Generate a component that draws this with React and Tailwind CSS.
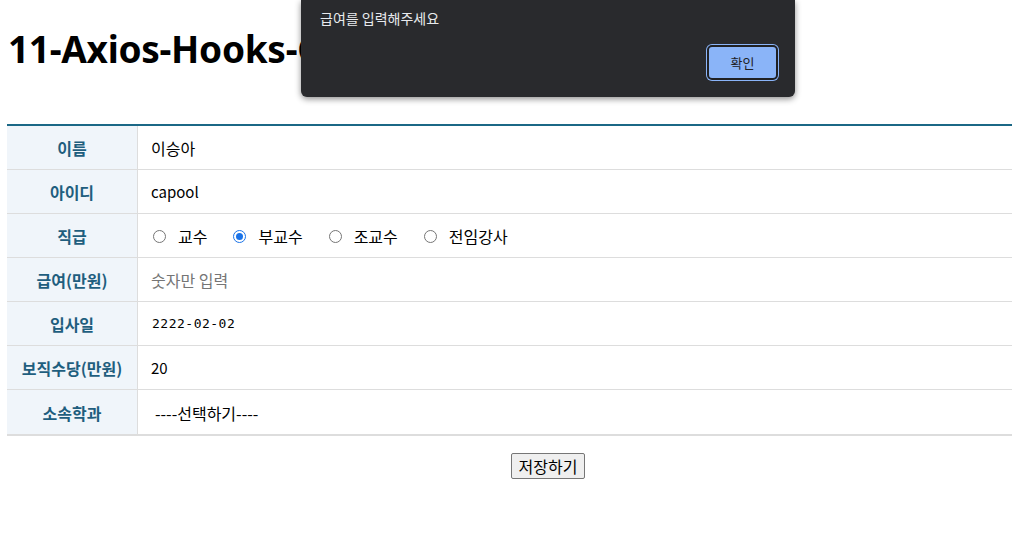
const rows = [
  { label: '이름', value: <span className="text-[16px]">이승아</span> },
  { label: '아이디', value: <span className="text-[15px]">capool</span> },
  {
    label: '직급',
    value: (
      <div className="flex items-center text-[16px]">
        {[
          ['교수', false],
          ['부교수', true],
          ['조교수', false],
          ['전임강사', false],
        ].map(([t, on]) => (
          <label key={t} className="flex items-center mr-[24px]">
            <span
              className={
                'w-[13px] h-[13px] rounded-full border flex items-center justify-center ml-[2px] mr-[12px] ' +
                (on ? 'border-[#1a73e8]' : 'border-[#767676]')
              }
            >
              {on && <span className="w-[7px] h-[7px] rounded-full bg-[#1a73e8]" />}
            </span>
            <span>{t}</span>
          </label>
        ))}
      </div>
    ),
  },
  { label: '급여(만원)', value: <span className="text-[16px] text-[#757575]">숫자만 입력</span> },
  {
    label: '입사일',
    value: <span className="pl-[1px] font-['DejaVu_Sans_Mono',monospace] text-[13px] tracking-[0.5px]">2222-02-02</span>,
  },
  { label: '보직수당(만원)', value: <span className="text-[15px]">20</span> },
  { label: '소속학과', value: <span className="pl-[4px] text-[16px]">----선택하기----</span> },
]

export default function App() {
  return (
    <div className="relative w-[1012px] h-[537px] overflow-hidden bg-white font-['Noto_Sans','Noto_Sans_CJK_KR',sans-serif] text-black">
      <h1 className="pt-[23px] pl-[8px] text-[37px] leading-[52px] font-bold tracking-[-0.3px]">
        11-Axios-Hooks-CRUD
      </h1>

      <div className="pl-[7px] mt-[49px]">
        <div className="border-t-2 border-[#1b6886] border-b-2 border-b-[#dddddd]">
          {rows.map((r, i) => (
            <div
              key={r.label}
              className={'flex h-[44px] ' + (i < rows.length - 1 ? 'border-b border-[#dddddd]' : '')}
            >
              <div className="w-[131px] shrink-0 bg-[#f0f5fa] border-r border-[#dddddd] flex items-center justify-center pt-[1px] text-[16px] font-bold text-[#1f5e7e] font-['Noto_Sans_CJK_KR',sans-serif]">
                {r.label}
              </div>
              <div className="flex items-center pl-[13px] pt-[1px] font-['Noto_Sans_CJK_KR',sans-serif]">
                {r.value}
              </div>
            </div>
          ))}
        </div>
      </div>

      <div className="flex justify-center mt-[17px]">
        <button className="ml-[84px] h-[26px] px-[7px] border border-[#767676] rounded-[2px] bg-[#efefef] text-[16px] leading-none font-['Noto_Sans_CJK_KR',sans-serif]">
          저장하기
        </button>
      </div>

      <div className="absolute left-[301px] top-0 w-[494px] h-[97px] bg-[#292a2d] rounded-b-[6px] shadow-[0_2px_6px_rgba(0,0,0,0.45)] font-['Noto_Sans_CJK_KR',sans-serif]">
        <div className="pl-[19px] pt-[8px] text-[14px] text-[#e8eaed]">급여를 입력해주세요</div>
        <button className="absolute left-[406px] top-[45px] w-[71px] h-[35px] rounded-[5px] bg-[#8ab4f8] border-2 border-[#202124] text-[13px] text-[#202124] shadow-[0_0_0_1px_#8ab4f8]">
          확인
        </button>
      </div>
    </div>
  )
}
